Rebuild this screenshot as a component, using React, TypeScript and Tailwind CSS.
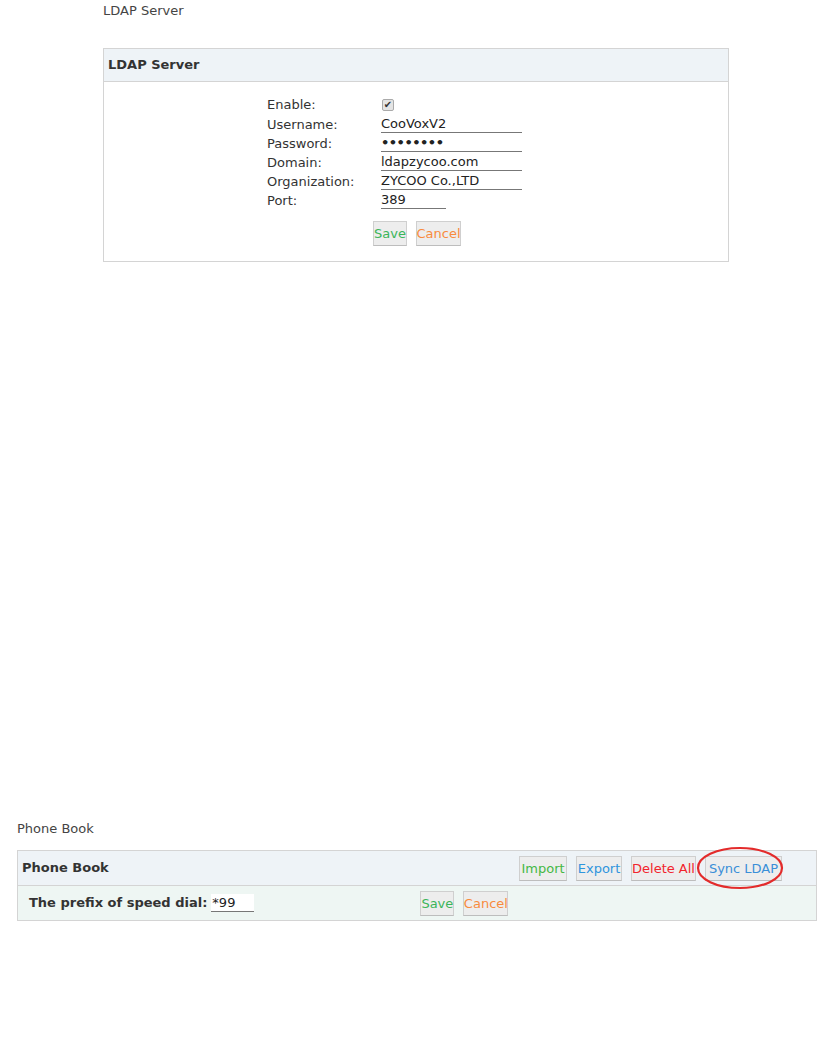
import React from 'react';

const font = { fontFamily: '"DejaVu Sans", Verdana, sans-serif' };

function Btn({ label, color, w }: { label: string; color: string; w: string }) {
  return (
    <button
      className={`h-[25px] ${w} ${color} text-[13px] leading-none bg-[#ededed] border border-[#cfcfcf] border-b-[#bdbdbd] flex items-center justify-center px-0`}
    >
      {label}
    </button>
  );
}

function Field({ label, value, wide = true }: { label: string; value: React.ReactNode; wide?: boolean }) {
  return (
    <div className="flex h-[19px] items-end">
      <div className="w-[114px] text-[13px] leading-[17px] text-[#333]">{label}</div>
      <div
        className={`${wide ? 'w-[141px]' : 'w-[65px]'} h-[18px] border-b border-[#777] text-[13px] leading-[17px] text-[#222]`}
      >
        {value}
      </div>
    </div>
  );
}

export default function App() {
  return (
    <div className="relative w-[819px] h-[1057px] bg-white text-[#333]" style={font}>
      {/* LDAP section */}
      <div className="pl-[103px] pt-[2px] text-[13px] leading-[17px] text-[#444]">LDAP Server</div>
      <div className="ml-[103px] mt-[29px] w-[626px] h-[214px] border border-[#d4d4d4] flex flex-col">
        <div className="h-[33px] bg-[#eef3f7] border-b border-[#d4d4d4] flex items-center pl-[4px]">
          <span className="text-[13px] font-bold text-[#333]">LDAP Server</span>
        </div>
        <div className="flex flex-col pl-[163px] pt-[13px]">
          <div className="flex h-[19px] items-center">
            <div className="w-[114px] text-[13px] leading-[17px] text-[#333]">Enable:</div>
            <span className="w-[12px] h-[12px] rounded-[2px] border border-[#aaa] bg-[#e4e4e4] flex items-center justify-center text-[10px] leading-none text-[#333] ml-[1px]">
              ✔
            </span>
          </div>
          <Field label="Username:" value="CooVoxV2" />
          <Field label="Password:" value={<span className="font-bold tracking-[-0.5px]">••••••••</span>} />
          <Field label="Domain:" value="ldapzycoo.com" />
          <Field label="Organization:" value="ZYCOO Co.,LTD" />
          <Field label="Port:" value="389" wide={false} />
          <div className="flex gap-[9px] pl-[106px] mt-[12px]">
            <Btn label="Save" color="text-[#3bb55a]" w="w-[34px]" />
            <Btn label="Cancel" color="text-[#f88b3d]" w="w-[45px]" />
          </div>
        </div>
      </div>

      {/* Phone Book section */}
      <div className="pl-[17px] mt-[558px] text-[13px] leading-[17px] text-[#444]">Phone Book</div>
      <div className="ml-[17px] mt-[13px] w-[800px] border border-[#d4d4d4] flex flex-col">
        <div className="relative h-[35px] bg-[#eef3f7] border-b border-[#d4d4d4] flex items-center pl-[4px]">
          <span className="text-[13px] font-bold text-[#333]">Phone Book</span>
          <div className="ml-auto mr-[34px] flex gap-[9px] items-center">
            <Btn label="Import" color="text-[#45b845]" w="w-[48px]" />
            <Btn label="Export" color="text-[#2f95dd]" w="w-[46px]" />
            <Btn label="Delete All" color="text-[#f2242c]" w="w-[65px]" />
            <Btn label="Sync LDAP" color="text-[#3a8fd8]" w="w-[77px]" />
          </div>
          <svg className="absolute left-[678px] top-[-5px]" width="88" height="44" viewBox="0 0 88 44">
            <ellipse cx="44" cy="22" rx="42" ry="20" fill="none" stroke="#e32b2b" strokeWidth="2.2" />
          </svg>
        </div>
        <div className="h-[34px] bg-[#eef6f3] flex items-center pl-[11px]">
          <span className="text-[13px] font-bold text-[#333]">The prefix of speed dial:</span>
          <span className="ml-[4px] w-[43px] h-[18px] bg-white border-b border-[#777] text-[13px] leading-[17px] text-[#222] pl-[1px]">
            *99
          </span>
          <div className="flex gap-[9px] ml-[166px]">
            <Btn label="Save" color="text-[#3bb55a]" w="w-[34px]" />
            <Btn label="Cancel" color="text-[#f88b3d]" w="w-[45px]" />
          </div>
        </div>
      </div>
    </div>
  );
}
